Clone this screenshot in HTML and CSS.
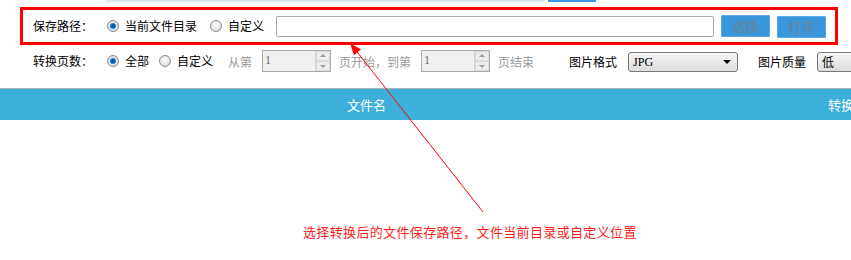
FILE: index.html
```html
<!DOCTYPE html>
<html lang="zh">
<head>
<meta charset="utf-8">
<title>转换设置</title>
<link rel="stylesheet" href="styles.css">
</head>
<body>
<div class="page">
  <div class="topstrip"><span class="strip-gray"></span><span class="strip-blue"></span></div>

  <div class="savebox">
    <span class="label">保存路径：</span>
    <span class="radio checked"></span><span class="opt">当前文件目录</span>
    <span class="radio"></span><span class="opt">自定义</span>
    <span class="pathinput"></span>
    <span class="btn">选择</span>
    <span class="btn">打开</span>
  </div>

  <div class="pagesrow">
    <span class="label">转换页数：</span>
    <span class="radio checked"></span><span class="opt opt-first">全部</span>
    <span class="radio"></span><span class="opt opt-last">自定义</span>
    <span class="muted">从第</span>
    <span class="spin"><span class="spin-val">1</span><span class="spin-btns"><span class="up"></span><span class="down"></span></span></span>
    <span class="muted">页开始，到第</span>
    <span class="spin"><span class="spin-val">1</span><span class="spin-btns"><span class="up"></span><span class="down"></span></span></span>
    <span class="muted end">页结束</span>
    <span class="field">图片格式</span>
    <span class="select fmt"><span class="sel-val">JPG</span><span class="caret"></span></span>
    <span class="field">图片质量</span>
    <span class="select qual"><span class="sel-val cjk">低</span></span>
  </div>

  <div class="tablehead">
    <span class="col-name">文件名</span>
    <span class="col-conv">转换</span>
  </div>

  <div class="note">选择转换后的文件保存路径，文件当前目录或自定义位置</div>

  <svg class="arrow" width="851" height="260" viewBox="0 0 851 260">
    <line x1="483" y1="212" x2="354" y2="48" stroke="#ff0000" stroke-width="1"/>
    <polygon points="350,43 353.9,55.2 360.9,49.6" fill="#ff0000"/>
  </svg>
</div>
</body>
</html>
```

FILE: styles.css
```css
html, body {
  margin: 0;
  padding: 0;
  background: #ffffff;
}
body {
  font-family: "Noto Sans CJK SC", "Noto Sans", sans-serif;
  font-size: 12px;
  color: #000;
}
.page {
  position: relative;
  width: 851px;
  height: 260px;
  overflow: hidden;
}
.topstrip {
  display: flex;
  height: 2px;
  padding-left: 105px;
}
.strip-gray {
  width: 440px;
  background: #dfe6ee;
}
.strip-blue {
  width: 48px;
  margin-left: 3px;
  background: #3a98dc;
}
.savebox {
  display: flex;
  align-items: center;
  height: 32px;
  margin: 5px 13px 0 20px;
  border: 3px solid #ff0000;
  padding-left: 10px;
}
.savebox > *,
.pagesrow > * {
  flex: none;
}
.label {
  width: 74px;
  line-height: 16px;
}
.radio {
  width: 12px;
  height: 12px;
  border-radius: 50%;
  box-sizing: border-box;
  border: 1px solid #8f8f8f;
  background: radial-gradient(circle at 45% 40%, #ffffff 0, #e6e6e6 55%, #c8c8c8 100%);
  margin-right: 6px;
}
.radio.checked {
  background: radial-gradient(circle at 50% 50%, #0a3f7a 0, #1569b8 28%, #3d9ae0 40%, #dfe9f2 48%, #c8c8c8 100%);
}
.opt {
  margin-right: 13px;
  line-height: 16px;
}
.pathinput {
  width: 436px;
  height: 19px;
  border: 1px solid #a9a9a9;
  border-radius: 2px;
  margin-left: -1px;
  margin-right: 7px;
  background: #fff;
}
.btn {
  width: 49px;
  height: 22px;
  line-height: 22px;
  text-align: center;
  background: #3a96db;
  color: #6f7f8f;
  font-size: 13px;
  border-radius: 2px;
  box-shadow: inset 0 0 0 1px #5aa9e2;
  margin-right: 7px;
}
.btn + .btn {
  margin-top: 2px;
}
.pagesrow {
  display: flex;
  align-items: center;
  height: 22px;
  margin-top: 5px;
  padding-left: 33px;
  white-space: nowrap;
}
.opt-first {
  margin-right: 10px;
}
.opt-last {
  margin-right: 15px;
}
.muted {
  color: #9a9a9a;
  margin-right: 10px;
}
.muted.end {
  margin-right: 35px;
}
.spin {
  display: flex;
  width: 69px;
  height: 22px;
  box-sizing: border-box;
  border: 1px solid #ababab;
  background: #f0f0f0;
  margin-right: 8px;
}
.spin-val {
  flex: 1;
  font-family: "Liberation Serif", serif;
  font-size: 12px;
  color: #6a6a6a;
  line-height: 18px;
  padding-left: 2px;
}
.spin-btns {
  display: flex;
  flex-direction: column;
  width: 14px;
  border-left: 1px solid #d0d0d0;
}
.spin-btns span {
  flex: 1;
  position: relative;
  background: #ececec;
  border: 1px solid #dadada;
}
.spin-btns .up::after,
.spin-btns .down::after {
  content: "";
  position: absolute;
  left: 3px;
  border-left: 3px solid transparent;
  border-right: 3px solid transparent;
}
.spin-btns .up::after {
  top: 2px;
  border-bottom: 3px solid #9a9a9a;
}
.spin-btns .down::after {
  top: 3px;
  border-top: 3px solid #9a9a9a;
}
.field {
  margin-right: 11px;
}
.select {
  display: flex;
  align-items: center;
  height: 20px;
  box-sizing: border-box;
  border: 1px solid #7a7a7a;
  border-radius: 3px;
  background: linear-gradient(#f6f6f6, #dcdcdc);
  position: relative;
}
.select.fmt {
  width: 110px;
  margin-top: 2px;
  margin-right: 20px;
}
.select.qual {
  width: 60px;
  margin-top: 2px;
}
.sel-val {
  flex: 1;
  padding-left: 4px;
  font-family: "Liberation Serif", serif;
  font-size: 12px;
  line-height: 16px;
}
.sel-val.cjk {
  font-family: "Noto Sans CJK SC", sans-serif;
}
.caret {
  width: 0;
  height: 0;
  border-left: 4px solid transparent;
  border-right: 4px solid transparent;
  border-top: 4px solid #000;
  margin-right: 6px;
}
.tablehead {
  display: flex;
  align-items: center;
  height: 31px;
  margin-top: 16px;
  border-top: 1px solid #a8b4bc;
  background: #3eafdb;
  color: #ffffff;
  font-size: 13px;
}
.col-name {
  margin-left: 347px;
}
.col-conv {
  margin-left: auto;
  width: 23px;
  overflow: hidden;
  white-space: nowrap;
}
.note {
  margin-top: 104px;
  padding-left: 303px;
  color: #ff1a1a;
  font-size: 13px;
  line-height: 16px;
  letter-spacing: 0.35px;
}
.arrow {
  position: absolute;
  left: 0;
  top: 0;
  pointer-events: none;
}
```
